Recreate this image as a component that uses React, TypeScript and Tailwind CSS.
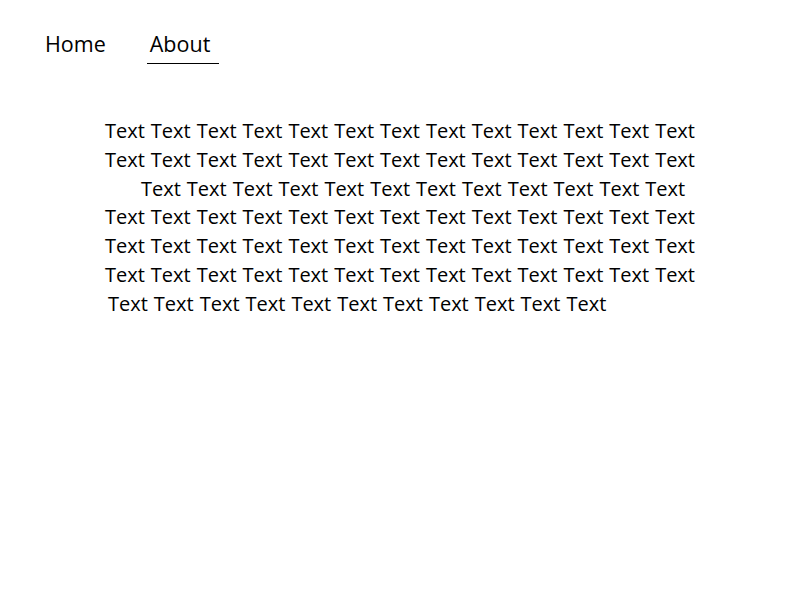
const LINES: { count: number; indent: string }[] = [
  { count: 13, indent: 'pl-[105px]' },
  { count: 13, indent: 'pl-[105px]' },
  { count: 12, indent: 'pl-[141px]' },
  { count: 13, indent: 'pl-[105px]' },
  { count: 13, indent: 'pl-[105px]' },
  { count: 13, indent: 'pl-[105px]' },
  { count: 11, indent: 'pl-[108px]' },
];

export default function App() {
  return (
    <div className="min-h-[600px] w-[800px] bg-white text-black [font-family:'Open_Sans',sans-serif]">
      <nav className="flex items-start pt-[30px] pl-[45px] text-[21.5px] leading-[28px]">
        <a href="#" className="block">
          Home
        </a>
        <a href="#" className="ml-[41px] block w-[72px] border-b border-black pb-[5px] pl-[3px]">
          About
        </a>
      </nav>
      <div className="mt-[53px] flex flex-col text-[20px] leading-[28.8px]">
        {LINES.map((line, i) => (
          <div key={i} className={`flex gap-[6px] ${line.indent}`}>
            {Array.from({ length: line.count }).map((_, j) => (
              <span key={j}>Text</span>
            ))}
          </div>
        ))}
      </div>
    </div>
  );
}
